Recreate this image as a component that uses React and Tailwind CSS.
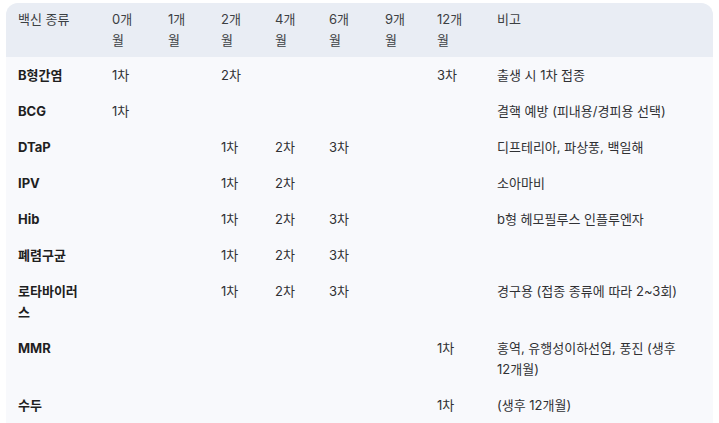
const cols = [
  { label: ['백신 종류'], w: 94 },
  { label: ['0개', '월'], w: 56 },
  { label: ['1개', '월'], w: 53 },
  { label: ['2개', '월'], w: 54 },
  { label: ['4개', '월'], w: 54 },
  { label: ['6개', '월'], w: 56 },
  { label: ['9개', '월'], w: 52 },
  { label: ['12개', '월'], w: 60 },
  { label: ['비고'], w: 228 },
]

const rows = [
  ['B형간염', '1차', '', '2차', '', '', '', '3차', '출생 시 1차 접종'],
  ['BCG', '1차', '', '', '', '', '', '', '결핵 예방 (피내용/경피용 선택)'],
  ['DTaP', '', '', '1차', '2차', '3차', '', '', '디프테리아, 파상풍, 백일해'],
  ['IPV', '', '', '1차', '2차', '', '', '', '소아마비'],
  ['Hib', '', '', '1차', '2차', '3차', '', '', 'b형 헤모필루스 인플루엔자'],
  ['폐렴구균', '', '', '1차', '2차', '3차', '', '', ''],
  ['로타바이러스', '', '', '1차', '2차', '3차', '', '', '경구용 (접종 종류에 따라 2~3회)'],
  ['MMR', '', '', '', '', '', '', '1차', '홍역, 유행성이하선염, 풍진 (생후 12개월)'],
  ['수두', '', '', '', '', '', '', '1차', '(생후 12개월)'],
]

export default function App() {
  return (
    <div className="min-h-screen bg-white pt-[3px] px-[6px]"
      style={{ fontFamily: 'Inter, "Noto Sans CJK KR", sans-serif' }}>
      <div className="w-[707px] rounded-t-xl overflow-hidden bg-[#f8f9fc]">
        <table className="table-fixed w-full text-[13px] leading-[21px] border-collapse">
          <colgroup>
            {cols.map(c => <col key={c.label[0]} style={{ width: c.w }} />)}
          </colgroup>
          <thead className="bg-[#e9edf4]">
            <tr>
              {cols.map(c => (
                <th key={c.label[0]}
                  className="text-left align-top font-normal text-[#3c4043] px-3 pt-[5.5px] pb-[6.5px]">
                  {c.label.map((l, i) => <div key={i}>{l}</div>)}
                </th>
              ))}
            </tr>
          </thead>
          <tbody>
            {rows.map(r => (
              <tr key={r[0]}>
                {r.map((cell, i) => (
                  <td key={i}
                    className={`align-top px-3 py-[7.5px] ${i === 0 ? 'font-bold text-[#1f1f1f] break-all' : i === 8 ? 'text-[#303134] break-keep' : 'text-[#303134]'}`}>
                    {cell}
                  </td>
                ))}
              </tr>
            ))}
          </tbody>
        </table>
      </div>
    </div>
  )
}
